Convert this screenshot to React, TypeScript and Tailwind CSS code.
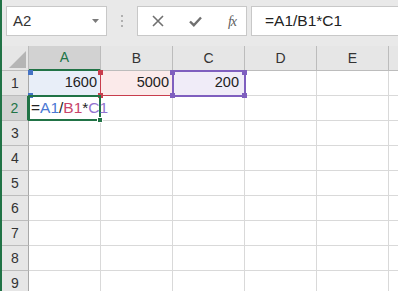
import React from 'react';

const GREEN = '#217346';
const COLS = ['A', 'B', 'C', 'D', 'E'];
const ROWS = [1, 2, 3, 4, 5, 6, 7, 8, 9, 10];

function Corner({ className }: { className: string }) {
  return <div className={`absolute w-[5px] h-[5px] ${className}`} />;
}

function Toolbar() {
  return (
    <div className="h-[46px] shrink-0 bg-[#e9e9e9] flex items-start pt-[6px] pl-[4px]">
      {/* Name box */}
      <div className="w-[101px] h-[30px] bg-white border border-[#c8c8c8] flex items-center pl-[6px] pr-[7px]">
        <span className="text-[15px] text-[#333] flex-1">A2</span>
        <svg width="7" height="4" viewBox="0 0 7 4">
          <path d="M0 0 H7 L3.5 4 Z" fill="#7a7a7a" />
        </svg>
      </div>
      {/* grip dots */}
      <div className="w-[30px] h-[30px] flex flex-col items-center justify-center gap-[3px]">
        <div className="w-[2px] h-[2px] bg-[#b0b0b0]" />
        <div className="w-[2px] h-[2px] bg-[#b0b0b0]" />
        <div className="w-[2px] h-[2px] bg-[#b0b0b0]" />
      </div>
      {/* cancel / enter / fx */}
      <div className="w-[110px] h-[30px] bg-white border border-[#c8c8c8] flex items-center">
        <div className="w-[36px] flex justify-center pl-[4px]">
          <svg width="12" height="12" viewBox="0 0 12 12">
            <path d="M1 1 L11 11 M11 1 L1 11" stroke="#707070" strokeWidth="1.6" />
          </svg>
        </div>
        <div className="w-[36px] flex justify-center pl-[6px]">
          <svg width="13" height="11" viewBox="0 0 13 11">
            <path d="M1 5.5 L4.8 9.2 L12 1.5" stroke="#707070" strokeWidth="2.4" fill="none" />
          </svg>
        </div>
        <div className="flex-1 flex justify-center pl-[8px]">
          <span className="text-[14px] italic text-[#606060] font-['Liberation_Serif',serif] tracking-[-1px]">
            fx
          </span>
        </div>
      </div>
      <div className="w-[4px]" />
      {/* formula bar */}
      <div className="flex-1 h-[30px] bg-white border border-[#c8c8c8] border-r-0 flex items-center pl-[13px]">
        <span className="text-[15.5px] text-[#222]">=A1/B1*C1</span>
      </div>
    </div>
  );
}

function HeaderRow() {
  return (
    <div className="flex h-[25px] shrink-0">
      <div className="w-[27px] shrink-0 bg-[#e6e6e6] border-r border-b border-[#bcbcbc] flex items-end justify-end pr-[2px] pb-[2px]">
        <svg width="17" height="17" viewBox="0 0 17 17">
          <path d="M17 0 V17 H0 Z" fill="#b5b5b5" />
        </svg>
      </div>
      {COLS.map((c) => (
        <div
          key={c}
          className={`w-[72px] shrink-0 flex items-center justify-center text-[14px] border-r ${
            c === 'A'
              ? 'bg-[#d2d2d2] text-[#217346] border-b-2 border-b-[#217346] border-r-[#bcbcbc]'
              : 'bg-[#e6e6e6] text-[#333] border-b border-[#bcbcbc]'
          }`}
        >
          {c}
        </div>
      ))}
      <div className="flex-1 bg-[#e6e6e6] border-b border-[#bcbcbc]" />
    </div>
  );
}

function DataCell({ row, col }: { row: number; col: string }) {
  const base = 'relative w-[72px] shrink-0 border-r border-b border-[#d9d9d9] flex items-center';
  if (row === 1 && col === 'A') {
    return (
      <div className={`${base} bg-[#e8eef8] justify-end pr-[3px]`}>
        <span className="text-[14.5px] text-[#222]">1600</span>
        <Corner className="-left-[1px] -top-[1px] bg-[#4472c4] z-10" />
        <Corner className="-left-[1px] -bottom-[3px] bg-[#4472c4] z-10" />
      </div>
    );
  }
  if (row === 1 && col === 'B') {
    return (
      <div className={`${base} bg-[#fbeaea] justify-end pr-[3px]`}>
        <span className="text-[14.5px] text-[#222]">5000</span>
        <div className="absolute -left-[1px] -top-[1px] w-[73px] h-[26px] border border-[#c83d4c] border-t-0 z-10" />
        <Corner className="-left-[3px] -top-[1px] bg-[#c83d4c] z-20" />
        <Corner className="-left-[3px] -bottom-[3px] bg-[#c83d4c] z-20" />
      </div>
    );
  }
  if (row === 1 && col === 'C') {
    return (
      <div className={`${base} bg-[#f0ecf8] justify-end pr-[5px]`}>
        <span className="text-[14.5px] text-[#222]">200</span>
        <div className="absolute -left-[1px] -top-[1px] w-[74px] h-[27px] border-2 border-[#7f5fbf] z-30" />
        <Corner className="-left-[3px] -top-[1px] bg-[#7f5fbf] z-30" />
        <Corner className="-left-[3px] -bottom-[3px] bg-[#7f5fbf] z-30" />
        <Corner className="-right-[3px] -top-[1px] bg-[#7f5fbf] z-30" />
        <Corner className="-right-[3px] -bottom-[3px] bg-[#7f5fbf] z-30" />
      </div>
    );
  }
  if (row === 2 && col === 'A') {
    return (
      <div className={`${base} pl-[2px]`}>
        <div className="absolute -left-[1px] -top-[1px] w-[73px] h-[26px] border-2 border-[#217346] z-40" />
        <div className="absolute -right-[3px] -bottom-[3px] w-[6px] h-[6px] bg-[#217346] border border-white z-40" />
        <span className="relative z-50 text-[15.5px] whitespace-nowrap">
          <span className="text-[#222]">=</span>
          <span className="text-[#4a78d4]">A1</span>
          <span className="text-[#222]">/</span>
          <span className="text-[#c8446a]">B1</span>
          <span className="text-[#222]">*</span>
          <span className="text-[#9374cf]">C1</span>
        </span>
      </div>
    );
  }
  return <div className={base} />;
}

function Row({ n }: { n: number }) {
  const sel = n === 2;
  return (
    <div className="flex h-[25px] shrink-0">
      <div
        className={`w-[27px] shrink-0 flex items-center justify-center text-[14px] border-b border-[#bcbcbc] ${
          sel
            ? 'bg-[#d2d2d2] text-[#217346] border-r-2 border-r-[#217346]'
            : 'bg-[#e6e6e6] text-[#333] border-r border-r-[#a8a8a8]'
        }`}
      >
        {n}
      </div>
      {COLS.map((c) => (
        <DataCell key={c} row={n} col={c} />
      ))}
      <div className="flex-1 border-b border-[#d9d9d9]" />
    </div>
  );
}

export default function App() {
  return (
    <div className="w-[398px] h-[291px] overflow-hidden flex bg-white font-['Liberation_Sans',sans-serif]">
      <div className="w-[2px] shrink-0" style={{ background: GREEN }} />
      <div className="flex-1 flex flex-col min-w-0">
        <Toolbar />
        <HeaderRow />
        {ROWS.map((n) => (
          <Row key={n} n={n} />
        ))}
      </div>
    </div>
  );
}
